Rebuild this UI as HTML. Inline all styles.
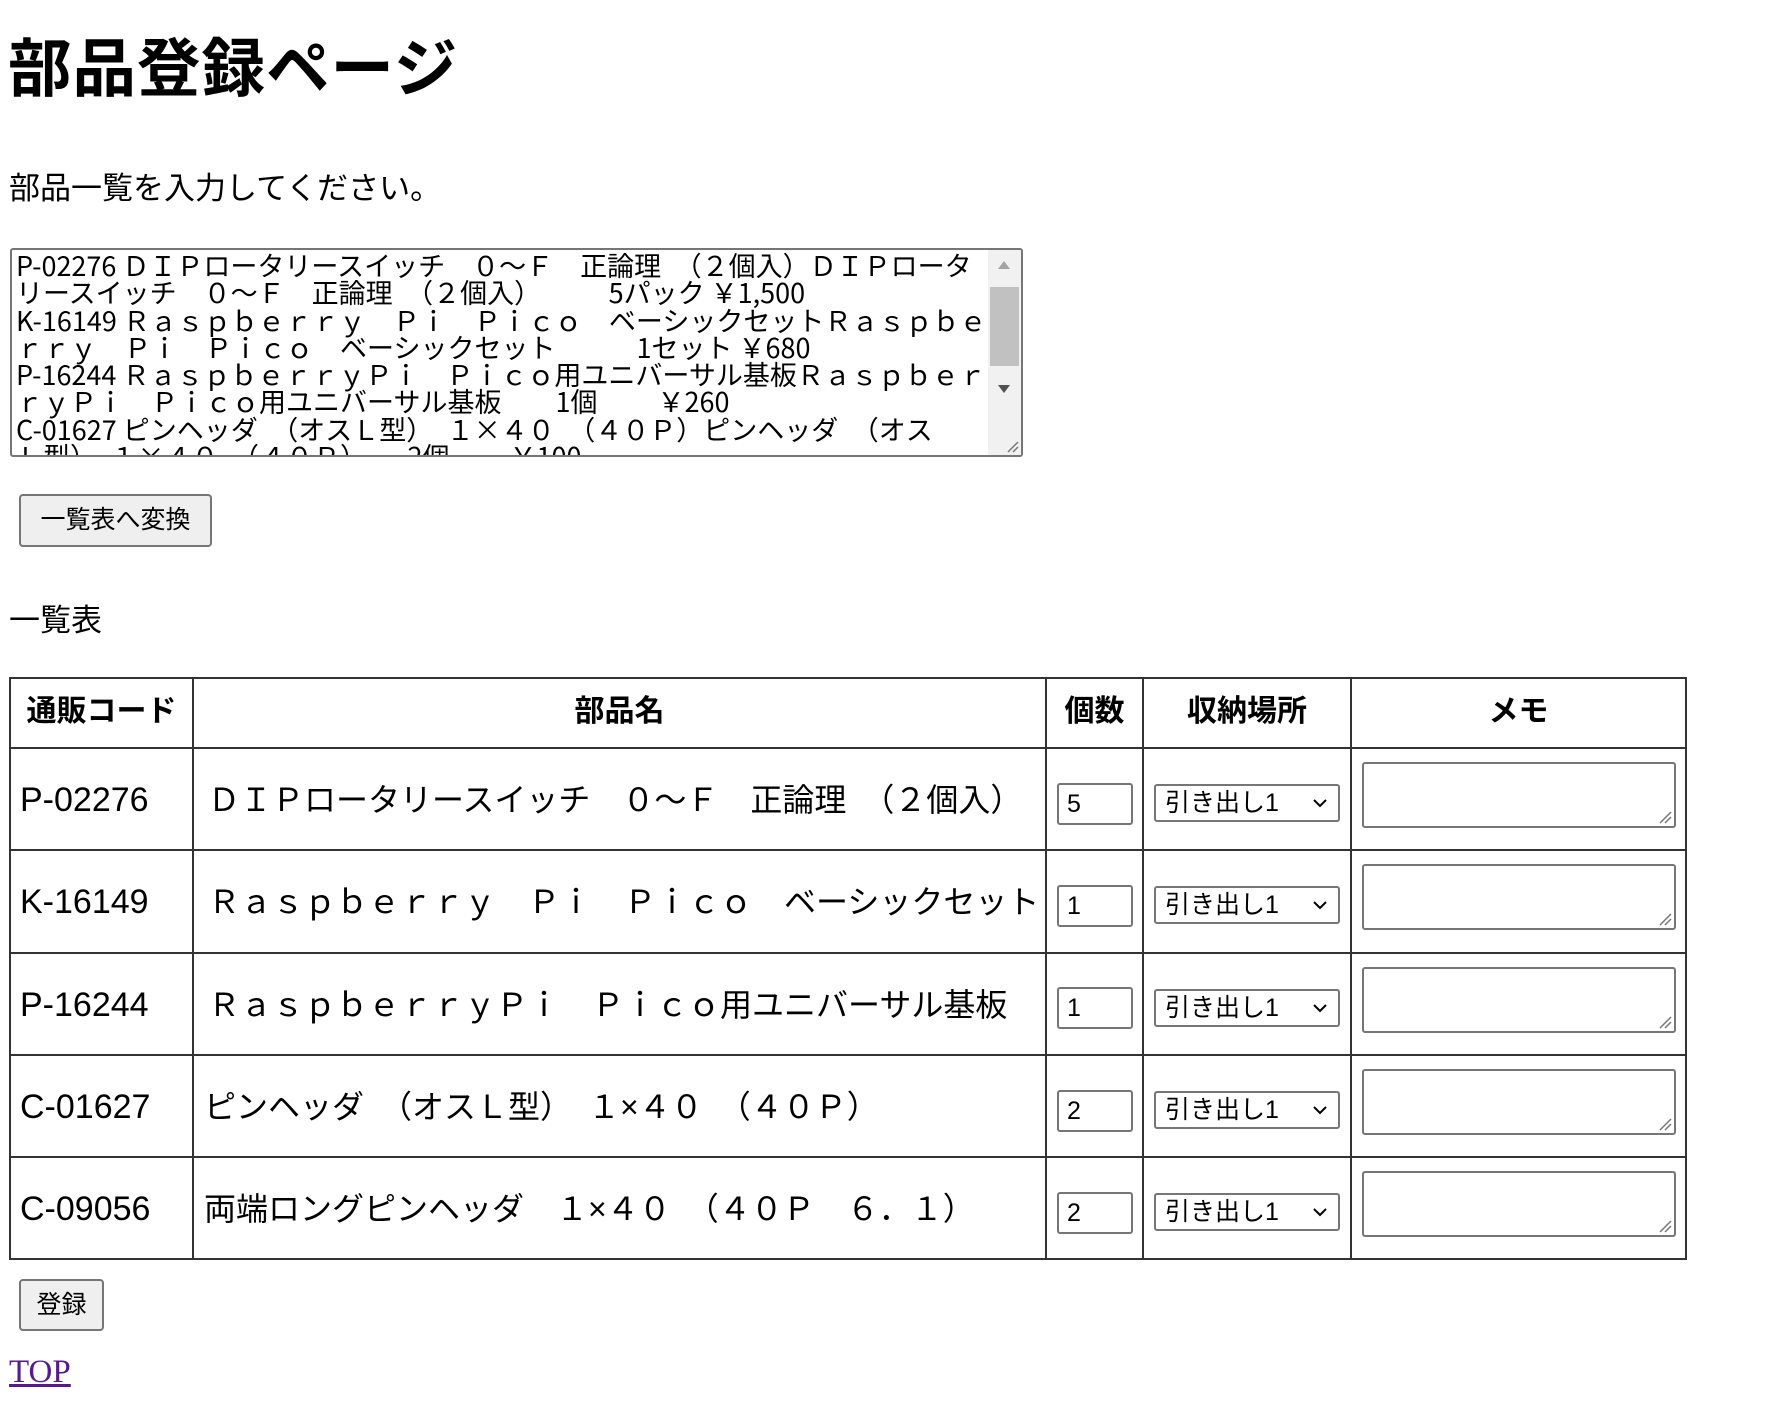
<!DOCTYPE html>
<html><head><meta charset="utf-8"><style>
body{margin:0;width:1768px;height:1424px;background:#fff;position:relative;overflow:hidden;font-family:"Liberation Sans","Noto Sans CJK JP",sans-serif;color:#000}
.a{position:absolute;white-space:nowrap}
h1{position:absolute;margin:0;left:8px;top:30px;font-size:63.5px;font-weight:bold;line-height:80px;letter-spacing:1px}
.p{font-size:31px;line-height:40px}
.ta{position:absolute;left:10px;top:248px;width:1013px;height:209px;border:2px solid #767676;border-radius:3px;box-sizing:border-box;overflow:hidden}
.tat{position:absolute;left:4px;top:1px;width:960px;font-family:"Noto Sans CJK JP",sans-serif;font-size:27px;line-height:27.3px;white-space:pre;letter-spacing:0}
.sb{position:absolute;right:0;top:0;width:33px;height:100%;background:#f1f1f1}
.thumb{position:absolute;left:2px;top:37px;width:29px;height:79px;background:#c1c1c1}
.btn{position:absolute;background:#efefef;border:2px solid #767676;border-radius:4px;box-sizing:border-box;font-size:25px;text-align:center}
.hl{position:absolute;background:#333;height:2px}
.vl{position:absolute;background:#333;width:2px}
.th{position:absolute;font-size:30px;font-weight:bold;text-align:center;line-height:68px;top:678px}
.cd{position:absolute;font-size:34px;left:20px;line-height:40px}
.nm{position:absolute;font-size:32px;letter-spacing:0;line-height:40px}
.num{position:absolute;left:1057px;width:76px;height:42px;border:2px solid #767676;border-radius:3px;box-sizing:border-box;font-size:25px;line-height:38px;padding-left:8px}
.sel{position:absolute;left:1154px;width:186px;height:38px;border:2px solid #767676;border-radius:3px;box-sizing:border-box;font-size:25px;line-height:34px;padding-left:9px}
.sel svg{position:absolute;right:10px;top:11px}
.memo{position:absolute;left:1362px;width:314px;height:66px;border:2px solid #767676;border-radius:3px;box-sizing:border-box}
.memo svg{position:absolute;right:2px;bottom:2px}
</style></head><body>
<h1>部品登録ページ</h1>
<div class="a p" style="left:9px;top:169px">部品一覧を入力してください。</div>
<div class="ta"><div class="tat">P-02276 ＤＩＰロータリースイッチ　０～Ｆ　正論理　（２個入）ＤＩＰロータ
リースイッチ　０～Ｆ　正論理　（２個入）　　　5パック ￥1,500
K-16149 Ｒａｓｐｂｅｒｒｙ　Ｐｉ　Ｐｉｃｏ　ベーシックセットＲａｓｐｂｅ
ｒｒｙ　Ｐｉ　Ｐｉｃｏ　ベーシックセット　　　1セット ￥680
P-16244 ＲａｓｐｂｅｒｒｙＰｉ　Ｐｉｃｏ用ユニバーサル基板Ｒａｓｐｂｅｒ
ｒｙＰｉ　Ｐｉｃｏ用ユニバーサル基板　　1個　　 ￥260
C-01627 ピンヘッダ　（オスＬ型）　１×４０　（４０Ｐ）ピンヘッダ　（オス
Ｌ型）　１×４０　（４０Ｐ）　　2個　　 ￥100</div>
<div class="sb"><div class="thumb"></div>
<svg style="position:absolute;left:9px;top:10px" width="14" height="10"><path d="M7 1L13 9H1Z" fill="#a3a3a3"/></svg>
<svg style="position:absolute;left:9px;top:134px" width="14" height="10"><path d="M1 1H13L7 9Z" fill="#505050"/></svg>
<svg style="position:absolute;right:2px;bottom:2px" width="14" height="14"><path d="M13 3L3 13M13 8L8 13" stroke="#777" stroke-width="1.5"/></svg>
</div></div>
<div class="btn" style="left:19px;top:494px;width:193px;height:53px;line-height:49px">一覧表へ変換</div>
<div class="a p" style="left:9px;top:601px">一覧表</div>

<div class="hl" style="left:9px;top:677px;width:1678px"></div>
<div class="hl" style="left:9px;top:747px;width:1678px"></div>
<div class="hl" style="left:9px;top:849px;width:1678px"></div>
<div class="hl" style="left:9px;top:952px;width:1678px"></div>
<div class="hl" style="left:9px;top:1054px;width:1678px"></div>
<div class="hl" style="left:9px;top:1156px;width:1678px"></div>
<div class="hl" style="left:9px;top:1258px;width:1678px"></div>
<div class="vl" style="left:9px;top:677px;height:583px"></div>
<div class="vl" style="left:192px;top:677px;height:583px"></div>
<div class="vl" style="left:1045px;top:677px;height:583px"></div>
<div class="vl" style="left:1142px;top:677px;height:583px"></div>
<div class="vl" style="left:1350px;top:677px;height:583px"></div>
<div class="vl" style="left:1685px;top:677px;height:583px"></div>

<div class="th" style="left:11px;width:181px">通販コード</div>
<div class="th" style="left:194px;width:851px">部品名</div>
<div class="th" style="left:1047px;width:95px">個数</div>
<div class="th" style="left:1144px;width:206px">収納場所</div>
<div class="th" style="left:1352px;width:333px">メモ</div>

<div class="cd" style="top:780px">P-02276</div>
<div class="nm" style="left:208px;top:780px">ＤＩＰロータリースイッチ　０～Ｆ　正論理　（２個入）</div>
<div class="cd" style="top:882px">K-16149</div>
<div class="nm" style="left:208px;top:882px">Ｒａｓｐｂｅｒｒｙ　Ｐｉ　Ｐｉｃｏ　ベーシックセット</div>
<div class="cd" style="top:985px">P-16244</div>
<div class="nm" style="left:208px;top:985px">ＲａｓｐｂｅｒｒｙＰｉ　Ｐｉｃｏ用ユニバーサル基板</div>
<div class="cd" style="top:1087px">C-01627</div>
<div class="nm" style="left:204px;top:1087px">ピンヘッダ　（オスＬ型）　１×４０　（４０Ｐ）</div>
<div class="cd" style="top:1189px">C-09056</div>
<div class="nm" style="left:204px;top:1189px">両端ロングピンヘッダ　１×４０　（４０Ｐ　６．１）</div>

<div class="num" style="top:783px">5</div>
<div class="num" style="top:885px">1</div>
<div class="num" style="top:987px">1</div>
<div class="num" style="top:1090px">2</div>
<div class="num" style="top:1192px">2</div>

<div class="sel" style="top:784px">引き出し1<svg width="16" height="12"><path d="M2 3L8 9L14 3" stroke="#000" stroke-width="2" fill="none"/></svg></div>
<div class="sel" style="top:886px">引き出し1<svg width="16" height="12"><path d="M2 3L8 9L14 3" stroke="#000" stroke-width="2" fill="none"/></svg></div>
<div class="sel" style="top:989px">引き出し1<svg width="16" height="12"><path d="M2 3L8 9L14 3" stroke="#000" stroke-width="2" fill="none"/></svg></div>
<div class="sel" style="top:1091px">引き出し1<svg width="16" height="12"><path d="M2 3L8 9L14 3" stroke="#000" stroke-width="2" fill="none"/></svg></div>
<div class="sel" style="top:1193px">引き出し1<svg width="16" height="12"><path d="M2 3L8 9L14 3" stroke="#000" stroke-width="2" fill="none"/></svg></div>

<div class="memo" style="top:762px"><svg width="14" height="14"><path d="M13 2L2 13M13 7L7 13" stroke="#777" stroke-width="1.5"/></svg></div>
<div class="memo" style="top:864px"><svg width="14" height="14"><path d="M13 2L2 13M13 7L7 13" stroke="#777" stroke-width="1.5"/></svg></div>
<div class="memo" style="top:967px"><svg width="14" height="14"><path d="M13 2L2 13M13 7L7 13" stroke="#777" stroke-width="1.5"/></svg></div>
<div class="memo" style="top:1069px"><svg width="14" height="14"><path d="M13 2L2 13M13 7L7 13" stroke="#777" stroke-width="1.5"/></svg></div>
<div class="memo" style="top:1171px"><svg width="14" height="14"><path d="M13 2L2 13M13 7L7 13" stroke="#777" stroke-width="1.5"/></svg></div>

<div class="btn" style="left:19px;top:1279px;width:85px;height:52px;line-height:48px">登録</div>
<div class="a" style="left:9px;top:1354px;font-family:'Liberation Serif',serif;font-size:33px;color:#551a8b;text-decoration:underline">TOP</div>
</body></html>
